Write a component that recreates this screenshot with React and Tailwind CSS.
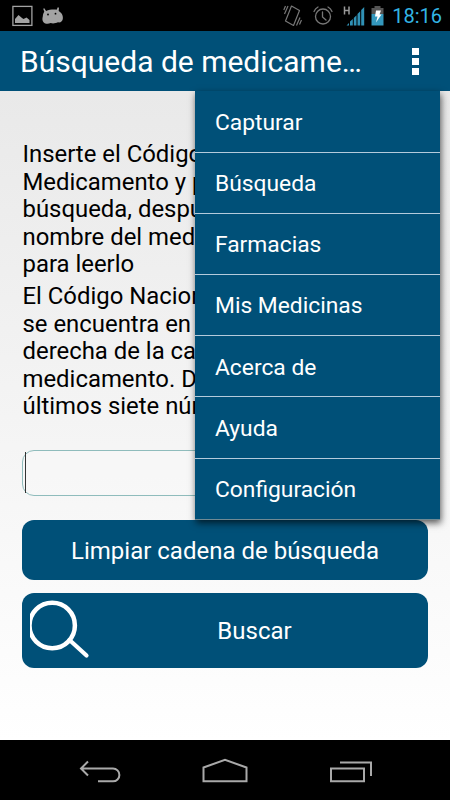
import { useState } from 'react';

const menuItems = [
  'Capturar',
  'Búsqueda',
  'Farmacias',
  'Mis Medicinas',
  'Acerca de',
  'Ayuda',
  'Configuración',
];

const StatusBar = () => (
  <div className="flex h-[31px] items-center justify-between bg-black pl-3 pr-[8px]">
    <svg width="54" height="24" viewBox="0 0 54 24" fill="none">
      {/* picture */}
      <rect x="0.9" y="2.400" width="19" height="19" stroke="#a3a3a3" strokeWidth="1.300" />
      <path d="M3 19v-4l3.500-4 3.500 3 1.500 1 3-1.500 3 2.500v3z" fill="#a3a3a3" />
      {/* android head */}
      <path
        d="M32.300 4.300l1.800 2.700c3-1.300 7-1.700 10.500-1.300l1.200-2.400 1.200.5-.3 3.200c3 1.700 4.300 4 4.200 7-.1 3.500-2.400 4.800-5 4.300-2 1-5 1.500-7.200.8-2.700 1.200-5.500.9-7.200-.8-1.300-1.500-1.300-3.800-.7-5.800.2-2 .6-3.500 1.500-4.700L31.200 4.800z"
        fill="#a3a3a3"
      />
      <circle cx="36" cy="10.500" r="0.900" fill="#000" />
      <circle cx="43.500" cy="9.700" r="0.900" fill="#000" />
    </svg>
    <div className="flex items-center">
      <svg width="104" height="24" viewBox="0 0 104 24" fill="none">
        {/* vibrate */}
        <g stroke="#777" strokeWidth="1.200">
          <path d="M8.500 2l8 4.500-6 15L2.500 17z" strokeLinejoin="round" />
          <path d="M5 2L1.500 10M2.500 2L.8 6M17 13.500L13.500 21.500M18.500 16L16.500 20.500" />
        </g>
        {/* alarm */}
        <g stroke="#777" strokeWidth="1.300" strokeLinecap="round">
          <circle cx="40" cy="12.500" r="7.500" />
          <path d="M39.500 8v5l3.500 3M31 7.500c.8-2 2-3.500 4-4.500M49 7.500c-.8-2-2-3.500-4-4.500" />
        </g>
        {/* signal */}
        <path d="M61.500 2.500v8M66 2.500v8M61.500 6.500h4.500" stroke="#999" strokeWidth="1.500" />
        <path d="M63.500 21.500h2.500v-2.500zM67 21.500v-4l2.800-2.500v6.500zM70.800 21.500v-7.500l2.700-2.700v10.200zM74.500 21.500V10l2.700-2.700v14.200zM78.200 21.500V6l3-3v18.500z" fill="#3091b5" />
        {/* battery */}
        <path d="M88.500 4h3V2h6v2h3v6h-12z" fill="#555" />
        <path d="M88.500 10h12v11.500h-12z" fill="#3498bd" />
        <path d="M93 6.500h5L96.500 10.500h2l-5.500 8 1.500-6H92z" fill="#fff" />
      </svg>
      <span className="w-[55px] whitespace-nowrap pt-[2px] text-right text-[20px] leading-[29px] text-[#33b5e5]">18:16</span>
    </div>
  </div>
);

const Header = ({ onToggle }) => (
  <header className="flex h-[60px] items-center justify-between bg-[#005078] pl-5 pr-[31px]">
    <h1 className="whitespace-nowrap pt-[2px] text-[30px] leading-[58px] text-white">Búsqueda de medicame…</h1>
    <button type="button" aria-label="Menú" onClick={onToggle} className="flex flex-col gap-[3px] pl-4 pt-px">
      <span className="h-[7px] w-[7px] bg-white" />
      <span className="h-[7px] w-[7px] bg-white" />
      <span className="h-[7px] w-[7px] bg-white" />
    </button>
  </header>
);

const OverflowMenu = () => (
  <ul className="absolute left-[195px] top-[91px] w-[245px] border-b border-[#6f8a94] bg-[#005078] shadow-[1px_3px_7px_rgba(0,0,0,0.65)]">
    {menuItems.map((item) => (
      <li
        key={item}
        className="flex h-[61.2px] items-center border-b-[1.5px] border-[#b4cbdc] pl-5 pt-[3px] text-[22.8px] text-white first:h-[61.6px] first:pt-1 last:h-[60.6px] last:border-b-0"
      >
        {item}
      </li>
    ))}
  </ul>
);

const NavBar = () => (
  <nav className="flex h-[60px] items-center bg-black">
    <svg width="450" height="60" viewBox="0 0 450 60" fill="none" stroke="#a9a9a9" strokeWidth="2">
      <path d="M88 21.500L81 28.500l7 7M81 28.500h32a6 6 0 0 1 0 12.800H98" />
      <path d="M203.500 41.300V27.500l21.500-7.700 21.500 7.700v13.800z" />
      <path d="M331 28.500h33v12.800h-33zM340 22.500h31v13.500" />
    </svg>
  </nav>
);

const App = () => {
  const [menuOpen, setMenuOpen] = useState(true);
  const [code, setCode] = useState('');

  return (
    <div className="relative flex h-[800px] w-[450px] flex-col overflow-hidden font-['Roboto',sans-serif]">
      <StatusBar />
      <Header onToggle={() => setMenuOpen(!menuOpen)} />

      <main className="flex flex-1 flex-col bg-linear-to-b from-[#e9e9e9] to-white px-[22px] pt-[50px]">
        <p className="whitespace-nowrap pl-[0.5px] text-[23.9px] leading-[27.5px] text-black">
          Inserte el Código
          <br />
          Medicamento y p
          <br />
          búsqueda, despu
          <br />
          nombre del med
          <br />
          para leerlo
        </p>
        <p className="mt-[4.500px] whitespace-nowrap pl-[0.5px] text-[23.9px] leading-[27.5px] text-black">
          El Código Nacion
          <br />
          se encuentra en
          <br />
          derecha de la ca
          <br />
          medicamento. D
          <br />
          últimos siete núm
        </p>

        <div className="mt-[29px] flex h-[46px] items-center rounded-xl border border-[#8fbcbc] bg-white/20 pl-[2px]">
          <span className="h-[41px] w-px bg-[#333]" />
          <input
            type="text"
            aria-label="Código"
            value={code}
            onChange={(e) => setCode(e.target.value)}
            className="w-full bg-transparent px-1 text-xl outline-none"
          />
        </div>

        <button
          type="button"
          onClick={() => setCode('')}
          className="mt-6 h-[60px] rounded-xl bg-[#005078] pt-[2px] text-[24px] text-white"
        >
          Limpiar cadena de búsqueda
        </button>

        <button type="button" className="mt-[13px] flex h-[75px] items-center rounded-xl bg-[#005078] text-[24px] text-white">
          <svg className="ml-2 shrink-0" width="60" height="60" viewBox="0 0 60 60" fill="none" stroke="#fff">
            <circle cx="22.200" cy="25.500" r="22.700" strokeWidth="4.500" />
            <path d="M39.500 40l17 15.500" strokeWidth="4.200" strokeLinecap="round" />
          </svg>
          <span className="flex-1 pr-[9px] pt-[2px] text-center">Buscar</span>
        </button>
      </main>

      <NavBar />
      {menuOpen && <OverflowMenu />}
    </div>
  );
};

export default App;
